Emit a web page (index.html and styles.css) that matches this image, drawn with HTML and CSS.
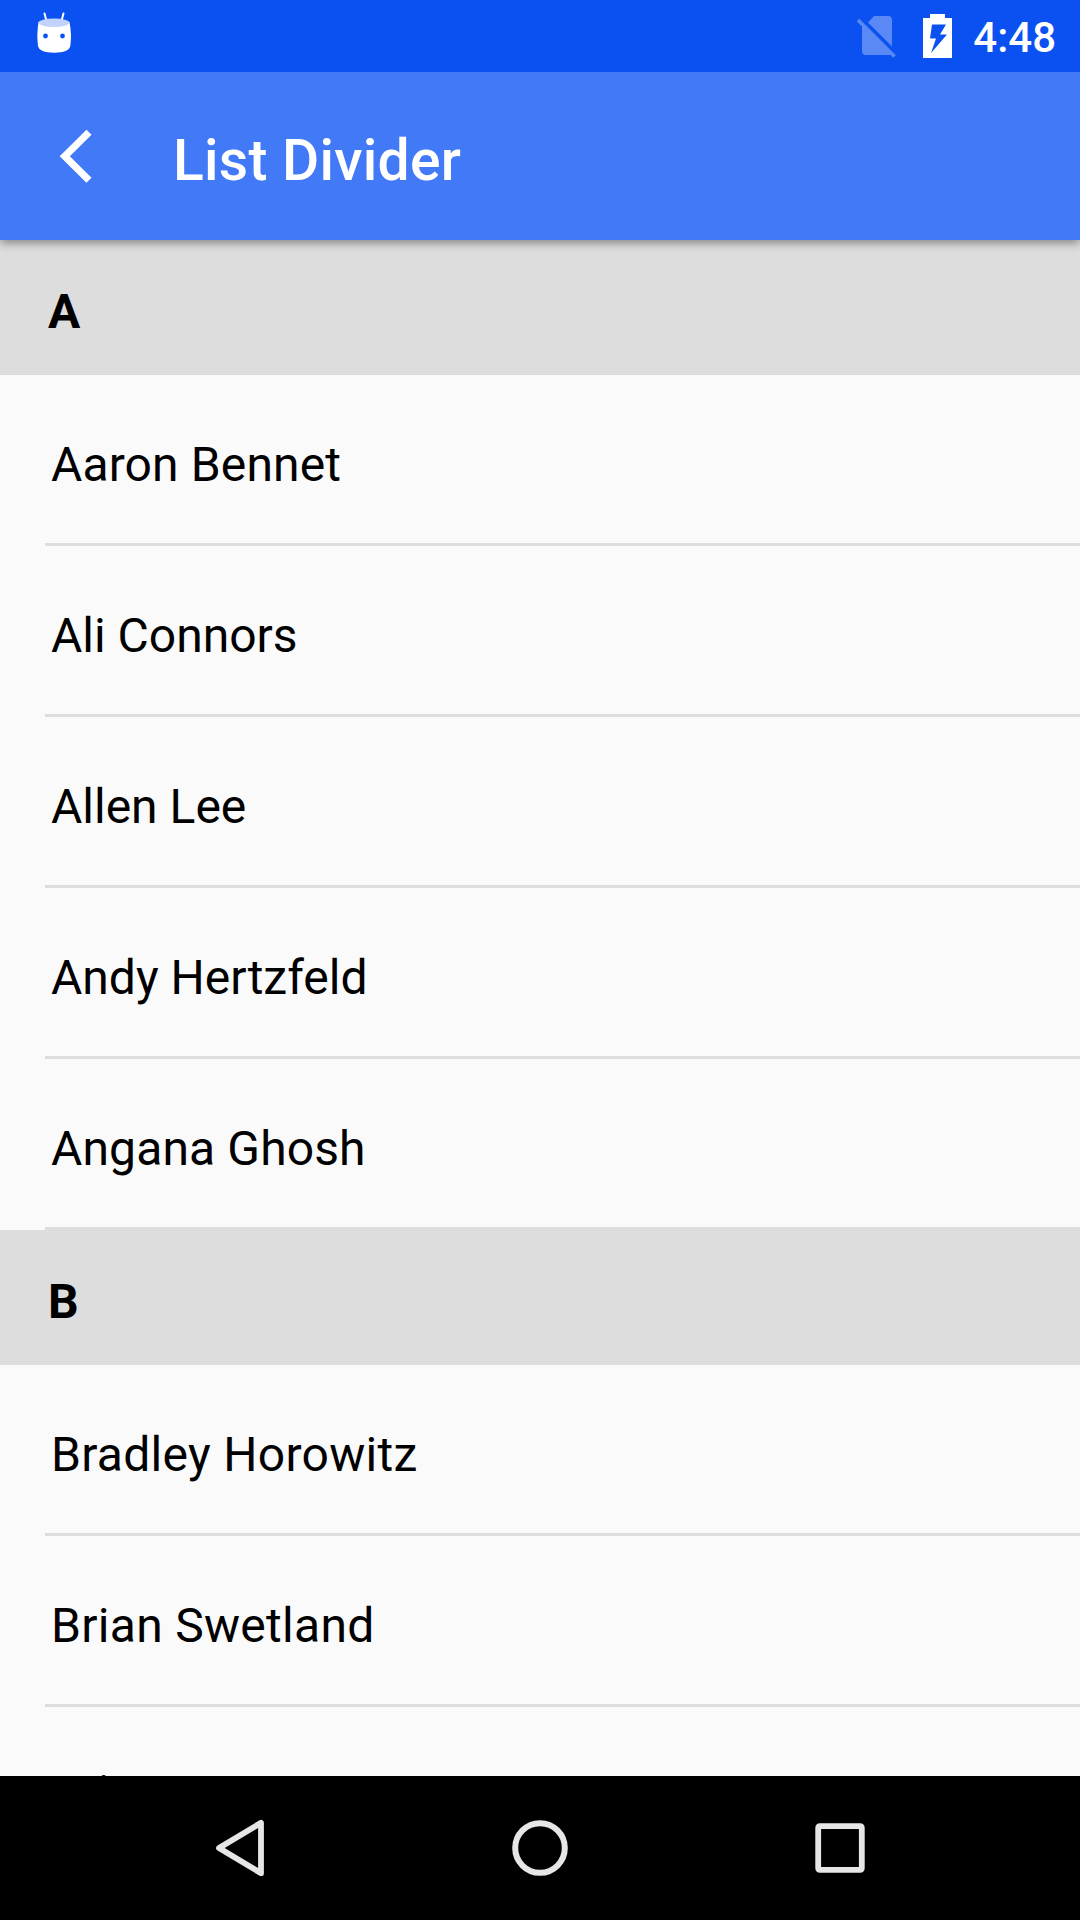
FILE: index.html
```html
<!DOCTYPE html>
<html lang="en">
<head>
<meta charset="utf-8">
<title>List Divider</title>
<link rel="stylesheet" href="styles.css">
</head>
<body>
<div class="screen">
  <div class="status-bar">
    <svg class="debug-icon" width="36" height="42" viewBox="0 0 36 42" aria-hidden="true">
      <path d="M8.500 1.500 L10.500 9 M27.500 1.500 L25.500 9" stroke="#fff" stroke-width="2" stroke-linecap="round"/>
      <path d="M2.500 10 Q17 14 33.500 10 Q36 23 34.300 34 Q33 40.700 18 40.700 Q3.500 40.700 2 34 Q.5 23 2.500 10Z" fill="#fff"/>
      <ellipse cx="18" cy="10.700" rx="15.500" ry="4.200" fill="#c2d2fc"/>
      <circle cx="9.500" cy="24" r="2.400" fill="#0b51f1"/>
      <circle cx="26.500" cy="24" r="2.400" fill="#0b51f1"/>
    </svg>
    <div class="status-right">
      <svg class="sim" width="40" height="46" viewBox="0 0 40 46" aria-hidden="true">
        <path d="M18 4 H32 Q36 4 36 8 V34.500 L12 10.500Z M6 12 L36 42 Q34.500 43 32 43 H10 Q6 43 6 39Z" fill="#5a89f6"/>
        <path d="M2 8 L38.500 44.500" stroke="#5a89f6" stroke-width="3.500"/>
      </svg>
      <svg class="battery" width="29" height="44" viewBox="0 0 29 44" aria-hidden="true">
        <path fill-rule="evenodd" d="M7 0 H22 V4 H29 V44 H0 V4 H7Z M9 10.500 L7 24.500 H13 L8 39 L24 20.500 H17 L23 10.500Z" fill="#fff"/>
      </svg>
      <span class="clock">4:48</span>
    </div>
  </div>
  <header class="toolbar">
    <svg width="34" height="54" viewBox="0 0 34 54" aria-label="Back">
      <path d="M29 3.200 L4.800 27.200 L29 51.200" fill="none" stroke="#fff" stroke-width="7.200"/>
    </svg>
    <h1 class="title">List Divider</h1>
  </header>
  <main class="list">
    <h2 class="divider">A</h2>
    <div class="row">Aaron Bennet</div>
    <div class="row snug">Ali Connors</div>
    <div class="row snug">Allen Lee</div>
    <div class="row snug">Andy Hertzfeld</div>
    <div class="row">Angana Ghosh</div>
    <h2 class="divider">B</h2>
    <div class="row wide">Bradley Horowitz</div>
    <div class="row wide">Brian Swetland</div>
    <div class="row wide">Br<span class="raised">i</span>an</div>
  </main>
  <nav class="nav-bar">
    <svg width="60" height="60" viewBox="0 0 60 60" aria-label="Back">
      <path d="M51 4.800 V55.200 L9 30Z" fill="none" stroke="#e6e6e6" stroke-width="5.800" stroke-linejoin="round"/>
    </svg>
    <svg width="60" height="60" viewBox="0 0 60 60" aria-label="Home">
      <circle cx="30" cy="30" r="24.800" fill="none" stroke="#e6e6e6" stroke-width="6"/>
    </svg>
    <svg width="60" height="60" viewBox="0 0 60 60" aria-label="Overview">
      <rect x="8.200" y="8.200" width="43.600" height="43.600" rx="1.500" fill="none" stroke="#e6e6e6" stroke-width="5.800"/>
    </svg>
  </nav>
</div>
</body>
</html>
```
FILE: styles.css
```css
* { box-sizing: border-box; }

body {
  margin: 0;
  font-family: Roboto, sans-serif;
  color: #000;
}

svg { display: block; overflow: visible; }

.screen {
  width: 1080px;
  height: 1920px;
  display: flex;
  flex-direction: column;
  overflow: hidden;
  background: #fafafa;
}

.status-bar {
  flex: 0 0 72px;
  display: flex;
  justify-content: space-between;
  align-items: flex-start;
  padding: 12px 24px 0 36px;
  background: #0b51f1;
  color: #fff;
  z-index: 2;
}

.status-right { display: flex; align-items: flex-start; }
.battery { margin: 2px 20px 0 27px; }

.clock {
  width: 84px;
  padding-top: 1px;
  font-size: 42px;
  line-height: 50px;
  font-weight: 500;
  text-align: right;
}

.toolbar {
  flex: 0 0 168px;
  display: flex;
  align-items: center;
  gap: 79px;
  padding-left: 60px;
  background: #4279f7;
  color: #fff;
  box-shadow: 0 3px 9px rgba(0, 0, 0, .4);
  z-index: 1;
}

.title {
  margin: 0;
  padding-top: 10px;
  font-size: 57px;
  line-height: 68px;
  font-weight: 500;
  letter-spacing: .25px;
}

.list { flex: 1; min-height: 0; overflow: hidden; }

.divider {
  margin: 0;
  height: 135px;
  padding: 7px 0 0 48px;
  background: #ddd;
  font-size: 48px;
  line-height: 129px;
  font-weight: 700;
}

.row {
  height: 171px;
  margin-left: 45px;
  padding: 10px 0 0 6px;
  border-bottom: 3px solid #ddd;
  font-size: 48px;
  line-height: 159px;
  letter-spacing: .13px;
}

.row.snug { letter-spacing: 0; }
.row.wide { letter-spacing: .3px; }
.row:last-child { padding-top: 8px; }
.raised { position: relative; top: -2px; }

.nav-bar {
  flex: 0 0 144px;
  display: flex;
  justify-content: center;
  align-items: center;
  gap: 240px;
  background: #000;
}
```
